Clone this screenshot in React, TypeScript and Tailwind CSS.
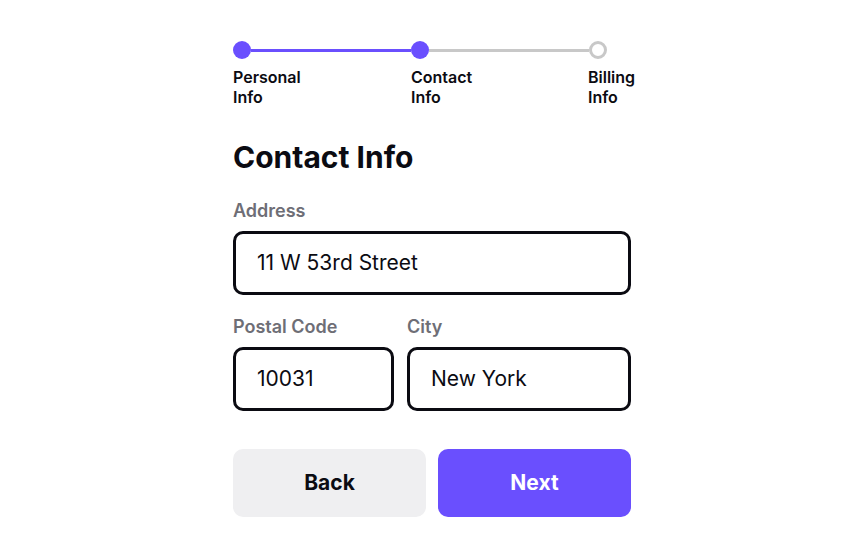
import React from "react"

const steps = [
  { name: "Personal", done: true },
  { name: "Contact", done: true },
  { name: "Billing", done: false },
]

const Field: React.FC<any> = ({ label, value, width }) => {
  return (
    <div className={`flex flex-col ${width}`}>
      <span className="text-lg leading-6 font-semibold text-[#6e6e76]">{label}</span>
      <div className="mt-2 h-16 flex items-center px-[21px] border-[3px] border-[#0b0b12] rounded-[10px] text-[21px] text-[#0b0b12]">
        {value}
      </div>
    </div>
  )
}

export default function App() {
  return (
    <div className="w-[864px] h-[540px] bg-white flex justify-center" style={{ fontFamily: "Inter, 'Noto Sans', sans-serif" }}>
      <div className="w-[398px] pt-[41px] flex flex-col">
        {/* stepper */}
        <div className="flex items-center pr-6">
          <div className="w-[18px] h-[18px] rounded-full bg-[#6a4ffe]" />
          <div className="flex-1 h-[3px] bg-[#6a4ffe]" />
          <div className="w-[18px] h-[18px] rounded-full bg-[#6a4ffe]" />
          <div className="flex-1 h-[3px] bg-[#c8c8c8]" />
          <div className="w-[18px] h-[18px] rounded-full border-[3px] border-[#c8c8c8] bg-white" />
        </div>
        <div className="flex mt-2 text-base leading-5 font-semibold text-[#0b0b12]">
          <div className="w-[178px] shrink-0">{steps[0].name}<br />Info</div>
          <div className="w-[177px] shrink-0">{steps[1].name}<br />Info</div>
          <div className="shrink-0">{steps[2].name}<br />Info</div>
        </div>

        <h1 className="mt-8 text-[30px] leading-9 font-bold text-[#0b0b12]">Contact Info</h1>

        <div className="mt-6">
          <Field label="Address" value="11 W 53rd Street" width="w-full" />
        </div>

        <div className="mt-5 flex gap-[13px]">
          <Field label="Postal Code" value="10031" width="w-[161px]" />
          <Field label="City" value="New York" width="flex-1" />
        </div>

        <div className="mt-[38px] flex gap-3">
          <button className="flex-1 h-[68px] rounded-[10px] bg-[#efeff1] text-[21px] font-bold text-[#0b0b12]">Back</button>
          <button className="flex-1 h-[68px] rounded-[10px] bg-[#6a4ffe] text-[21px] font-bold text-white">Next</button>
        </div>
      </div>
    </div>
  )
}
